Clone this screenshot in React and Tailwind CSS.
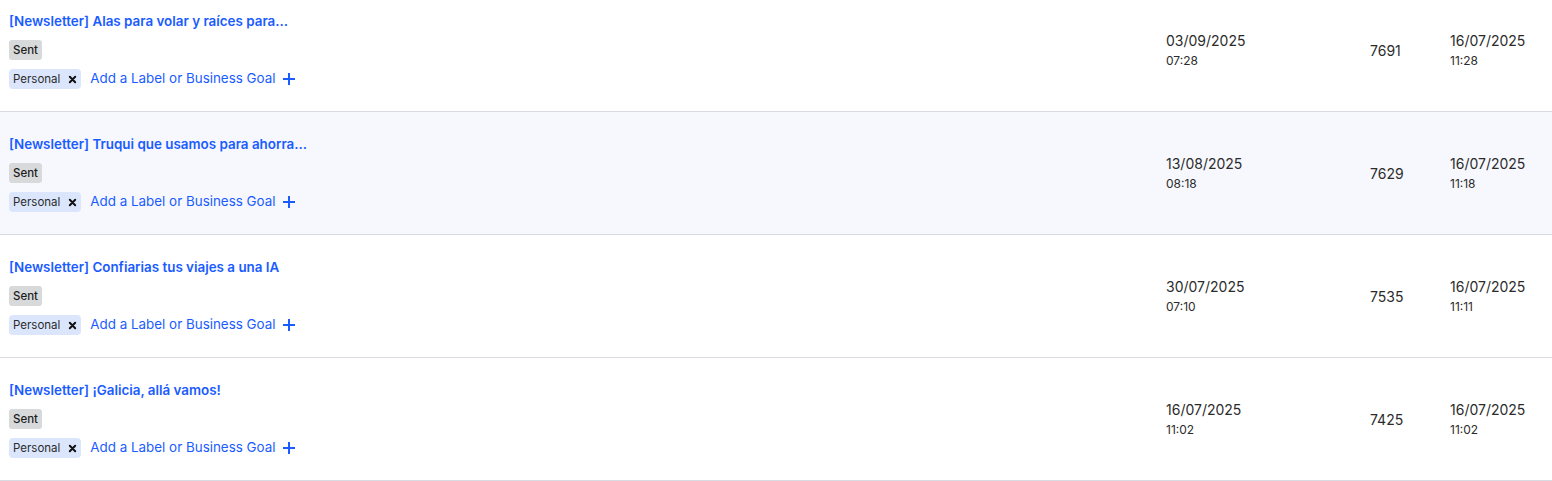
import React from "react";

const rows = [
  { title: "[Newsletter] Alas para volar y raíces para...", d1: "03/09/2025", t1: "07:28", n: "7691", d2: "16/07/2025", t2: "11:28", bg: "bg-white" },
  { title: "[Newsletter] Truqui que usamos para ahorra...", d1: "13/08/2025", t1: "08:18", n: "7629", d2: "16/07/2025", t2: "11:18", bg: "bg-[#f7f8fd]" },
  { title: "[Newsletter] Confiarias tus viajes a una IA", d1: "30/07/2025", t1: "07:10", n: "7535", d2: "16/07/2025", t2: "11:11", bg: "bg-white" },
  { title: "[Newsletter] ¡Galicia, allá vamos!", d1: "16/07/2025", t1: "11:02", n: "7425", d2: "16/07/2025", t2: "11:02", bg: "bg-white" },
];

function XIcon() {
  return (
    <svg width="9" height="9" viewBox="0 0 10 10" className="text-[#111]">
      <path d="M2 2 L8 8 M8 2 L2 8" stroke="currentColor" strokeWidth="2.2" strokeLinecap="round" />
    </svg>
  );
}

function PlusIcon() {
  return (
    <svg width="14" height="14" viewBox="0 0 14 14" className="text-[#1a5cff]">
      <path d="M7 1 V13 M1 7 H13" stroke="currentColor" strokeWidth="2" />
    </svg>
  );
}

export default function App() {
  return (
    <div className="w-[1552px] h-[481px] overflow-hidden bg-white font-['Inter',sans-serif] text-[#2b2b2b]">
      <div className="-mt-[11px]">
        {rows.map((r, i) => (
          <div key={i} className={`flex items-center h-[123px] border-b border-[#d9dbe3] ${r.bg}`}>
            <div className="flex-1 pl-[9px] pt-[2px] flex flex-col items-start">
              <div className="text-[13.4px] leading-[16px] font-semibold text-[#1a5cff]">{r.title}</div>
              <div className="mt-[11px] h-[20px] px-[4px] pt-[2px] rounded-[3px] bg-[#d8d9db] text-[11.5px] leading-none font-medium text-[#1d1d1d] flex items-center">Sent</div>
              <div className="mt-[9px] flex items-center">
                <div className="h-[20px] pl-[4px] pr-[4px] rounded-[4px] bg-[#dbe6fd] text-[11.5px] leading-none text-[#2b2b2b] flex items-center gap-[8px]">
                  <span className="pt-[2px]">Personal</span>
                  <XIcon />
                </div>
                <span className="ml-[9px] -mt-[1px] text-[13.4px] text-[#1a5cff]">Add a Label or Business Goal</span>
                <span className="ml-[7px] flex items-center"><PlusIcon /></span>
              </div>
            </div>
            <div className="w-[204px] flex flex-col">
              <div className="text-[14px] leading-[18px] text-[#2b2b2b]">{r.d1}</div>
              <div className="mt-[4px] text-[12px] leading-[14px] text-[#2b2b2b]">{r.t1}</div>
            </div>
            <div className="w-[80px] text-[14px] text-[#2b2b2b]">{r.n}</div>
            <div className="w-[102px] flex flex-col">
              <div className="text-[14px] leading-[18px] text-[#2b2b2b]">{r.d2}</div>
              <div className="mt-[4px] text-[12px] leading-[14px] text-[#2b2b2b]">{r.t2}</div>
            </div>
          </div>
        ))}
      </div>
    </div>
  );
}
